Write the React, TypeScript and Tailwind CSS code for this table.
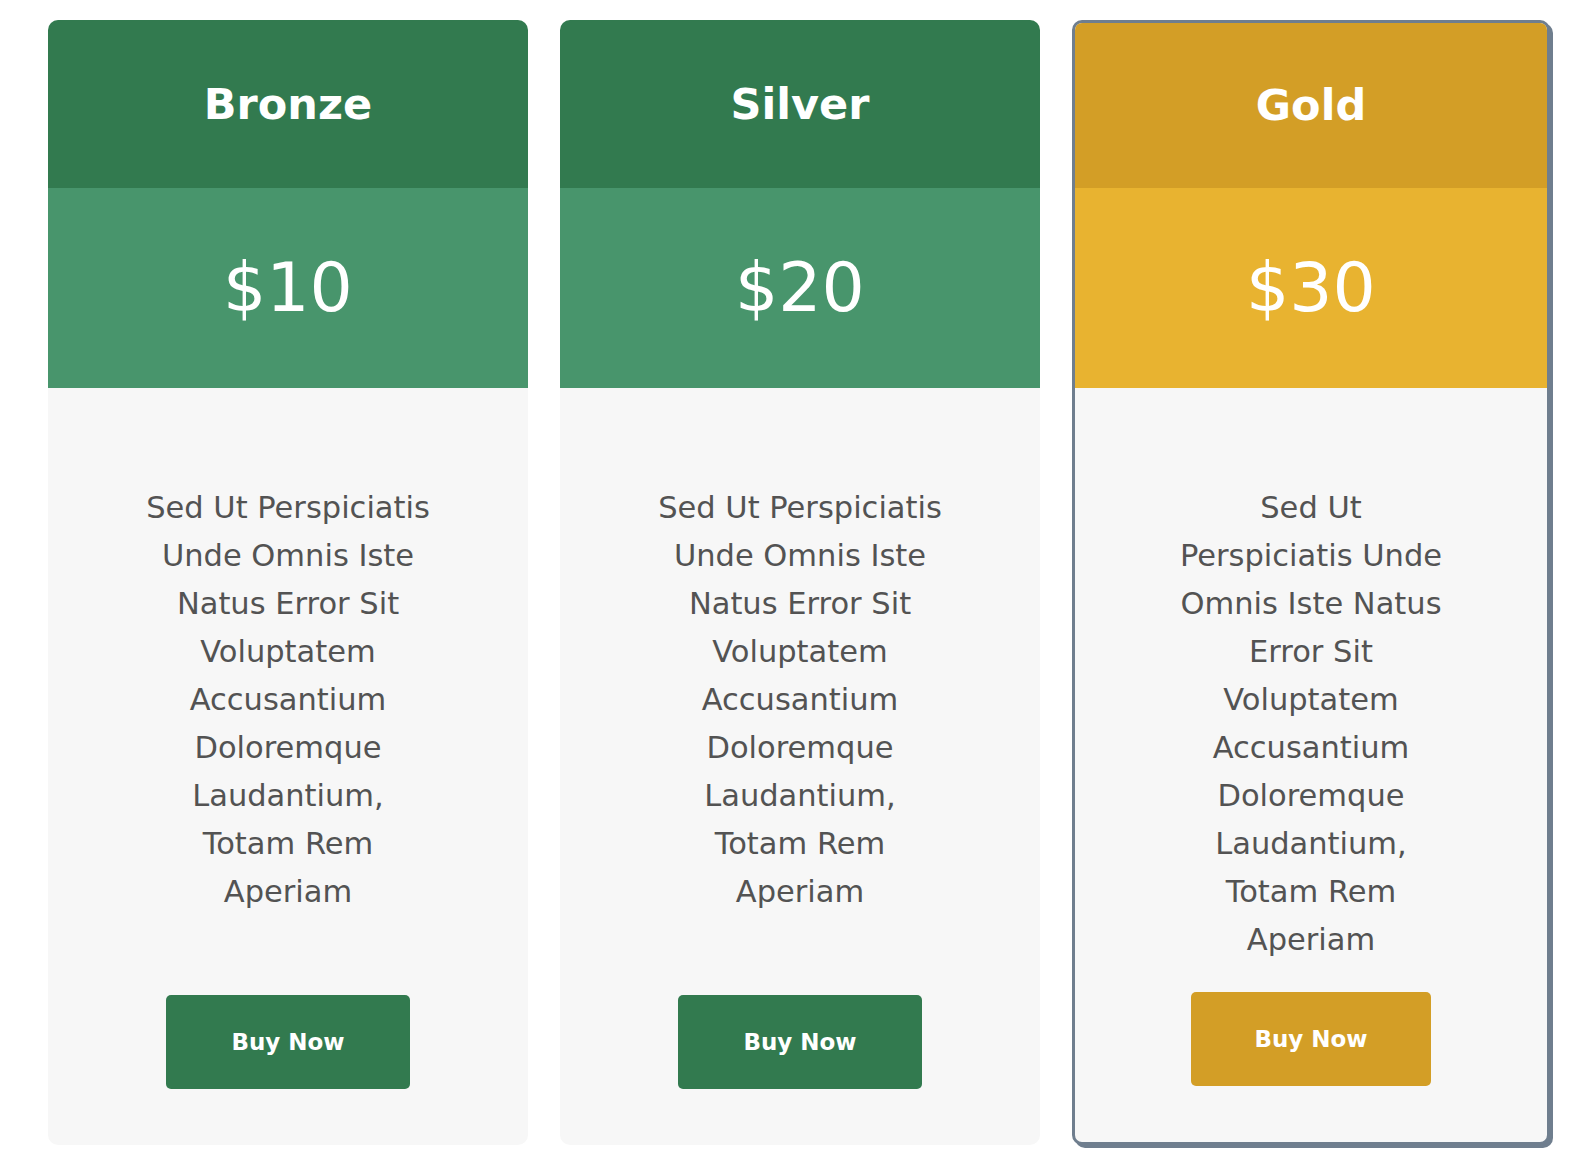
import React from 'react';

interface Plan {
  name: string;
  price: string;
  lines: string[];
  featured?: boolean;
}

const plans: Plan[] = [
  {
    name: 'Bronze',
    price: '$10',
    lines: ['Sed Ut Perspiciatis', 'Unde Omnis Iste', 'Natus Error Sit', 'Voluptatem', 'Accusantium', 'Doloremque', 'Laudantium,', 'Totam Rem', 'Aperiam'],
  },
  {
    name: 'Silver',
    price: '$20',
    lines: ['Sed Ut Perspiciatis', 'Unde Omnis Iste', 'Natus Error Sit', 'Voluptatem', 'Accusantium', 'Doloremque', 'Laudantium,', 'Totam Rem', 'Aperiam'],
  },
  {
    name: 'Gold',
    price: '$30',
    featured: true,
    lines: ['Sed Ut', 'Perspiciatis Unde', 'Omnis Iste Natus', 'Error Sit', 'Voluptatem', 'Accusantium', 'Doloremque', 'Laudantium,', 'Totam Rem', 'Aperiam'],
  },
];

const PlanCard: React.FC<{ plan: Plan }> = ({ plan }) => {
  const gold = plan.featured;
  return (
    <div
      className={
        gold
          ? 'w-[478px] shrink-0 flex flex-col rounded-[10px] overflow-hidden bg-[#f7f7f7] border-[3px] border-[#6f7e8e] shadow-[3px_3px_0_#6f7e8e]'
          : 'w-[480px] shrink-0 flex flex-col rounded-[10px] overflow-hidden bg-[#f7f7f7]'
      }
    >
      <div className={gold ? 'h-[165px] flex items-center justify-center bg-[#d39e26]' : 'h-[168px] flex items-center justify-center bg-[#327a4f]'}>
        <h2 className="text-[43px] font-bold text-white leading-none">{plan.name}</h2>
      </div>
      <div className={gold ? 'h-[200px] flex items-center justify-center bg-[#e8b330]' : 'h-[200px] flex items-center justify-center bg-[#48956c]'}>
        <span className="text-[68px] text-white leading-none">{plan.price}</span>
      </div>
      <div className="flex-1 flex flex-col items-center pt-24 pb-14">
        <p className="text-[30.5px] leading-[48px] text-[#535353] text-center mb-7">
          {plan.lines.map((l) => (
            <span key={l} className="block">{l}</span>
          ))}
        </p>
        <button
          className={
            gold
              ? 'mt-auto w-[240px] h-[94px] rounded-[5px] bg-[#d39e26] text-white text-[23px] font-bold'
              : 'mt-auto w-[244px] h-[94px] rounded-[5px] bg-[#327a4f] text-white text-[23px] font-bold'
          }
        >
          Buy Now
        </button>
      </div>
    </div>
  );
};

export default function App() {
  return (
    <div className="min-h-screen bg-white pt-5 pb-6 pl-12 font-['DejaVu_Sans',sans-serif]">
      <div className="flex gap-8 items-stretch">
        {plans.map((p) => (
          <PlanCard key={p.name} plan={p} />
        ))}
      </div>
    </div>
  );
}
